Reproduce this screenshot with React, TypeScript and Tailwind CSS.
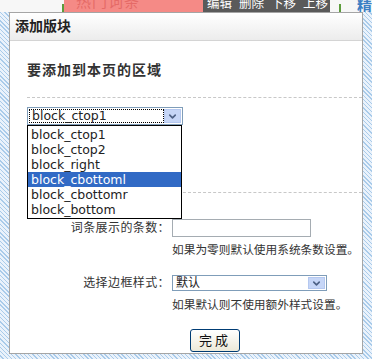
import { ChevronDown } from "lucide-react";

const regions = [
  "block_ctop1",
  "block_ctop2",
  "block_right",
  "block_cbottoml",
  "block_cbottomr",
  "block_bottom",
];

const cjk = "font-['Liberation_Sans','Noto_Sans_CJK_SC',sans-serif]";

/* XP style select arrow */
const SelectArrow = () => (
  <span className="flex h-full w-[17px] items-center justify-center border border-[#b5c8f0] bg-[#c6d6f7] text-[#4d6185]">
    <ChevronDown size={11} strokeWidth={3.5} />
  </span>
);

const App = () => {
  return (
    <div className="relative h-[359px] w-[372px] overflow-hidden bg-[repeating-linear-gradient(45deg,#eaf2fb_0px,#eaf2fb_2px,#a9cbea_2px,#a9cbea_3px)]">
      {/* page behind the dialog */}
      <div className={`flex h-[12px] items-start overflow-hidden whitespace-nowrap bg-[#f7f7f7] pl-[9px] text-[13px] leading-[13px] ${cjk}`}>
        <div className="h-full w-[53px] shrink-0" />
        <div className="mt-[4px] h-[8px] w-[2px] shrink-0 bg-[#5c9c3c]" />
        <div className="h-full w-[139px] shrink-0 overflow-hidden bg-[#f58a86] pl-[12px] text-[15px] leading-[15px] text-[#e56a67]">
          <span className="relative top-[-6px] tracking-[1px]">热门词条</span>
        </div>
        <div className="flex h-full w-[127px] shrink-0 gap-[7px] overflow-hidden bg-[#5a5a5a] pl-[4px] text-[12.5px] text-white">
          <span className="relative top-[-2px] shrink-0">编辑</span>
          <span className="relative top-[-2px] shrink-0">删除</span>
          <span className="relative top-[-2px] shrink-0">下移</span>
          <span className="relative top-[-2px] shrink-0">上移</span>
        </div>
        <div className="h-full w-[9px] shrink-0" />
        <div className="mt-[4px] h-[8px] w-[2px] shrink-0 bg-[#5c9c3c]" />
        <div className="h-full w-[16px] shrink-0" />
        <div className="h-full overflow-hidden text-[15px] font-bold text-[#3b7fc4]">
          <span className="relative top-[-1px]">精</span>
        </div>
      </div>

      {/* dialog */}
      <div className={`relative ml-[9px] h-[342px] w-[354px] border border-[#a5a5a5] bg-white text-[#333] ${cjk}`}>
        <div className="flex h-[28px] items-center border-b border-[#d4d4d4] bg-[linear-gradient(#ffffff,#ececec)] pl-[5px]">
          <span className="text-[14px] font-bold text-[#222]">添加版块</span>
        </div>

        <div className="pl-[17px]">
          <div className="pt-[21px] text-[14px] font-bold leading-[17px] tracking-[1px] text-[#333]">
            要添加到本页的区域
          </div>
          <div className="mt-[18px] border-t border-dashed border-[#c8c8c8]" />

          <div className="relative mt-[9px] h-[18px] w-[156px]">
            <div className="flex h-full items-center border border-[#7f9db9] bg-white p-[1px]">
              <span className="flex h-full flex-1 items-center border border-dotted border-black pl-[2px] font-['DejaVu_Sans',sans-serif] text-[12.5px] leading-none text-[#222]">
                block_ctop1
              </span>
              <SelectArrow />
            </div>
            <ul className="absolute left-0 top-[18px] z-10 w-[155px] border border-black bg-white py-[1px] font-['DejaVu_Sans',sans-serif] text-[12.5px] leading-[15px] text-[#222]">
              {regions.map((r) => (
                <li
                  key={r}
                  className={
                    r === "block_cbottoml"
                      ? "bg-[#316ac5] pl-[3px] text-white"
                      : "pl-[3px]"
                  }
                >
                  {r}
                </li>
              ))}
            </ul>
          </div>

          <div className="mt-[67px] border-t border-dashed border-[#c8c8c8]" />

          <div className="mt-[26px] grid grid-cols-[145px_1fr] gap-y-[6px] whitespace-nowrap text-[12px] leading-[14px]">
            <span className="flex items-center justify-end pr-[2px] tracking-[0.4px]">词条展示的条数：</span>
            <div className="h-[18px] w-[139px] border border-[#a5acb2] bg-white" />
            <span />
            <span className="text-[11.7px]">如果为零则默认使用系统条数设置。</span>
          </div>

          <div className="mt-[18px] grid grid-cols-[145px_1fr] gap-y-[7px] whitespace-nowrap text-[12px] leading-[14px]">
            <span className="flex items-center justify-end pr-[2px] tracking-[0.4px]">选择边框样式：</span>
            <div className="flex h-[16px] w-[155px] items-center border border-[#7f9db9] bg-white p-[1px]">
              <span className="flex-1 pl-[2px] leading-none text-[#222]">默认</span>
              <SelectArrow />
            </div>
            <span />
            <span className="text-[11.7px]">如果默认则不使用额外样式设置。</span>
          </div>

          <div className="mt-[16px] pl-[163px]">
            <button className="h-[23px] w-[50px] rounded-[3px] border border-[#003c74] bg-[linear-gradient(#ffffff,#ece9d8)] text-[13px] tracking-[3px] text-[#111]">
              完成
            </button>
          </div>
        </div>
      </div>
    </div>
  );
};

export default App;
